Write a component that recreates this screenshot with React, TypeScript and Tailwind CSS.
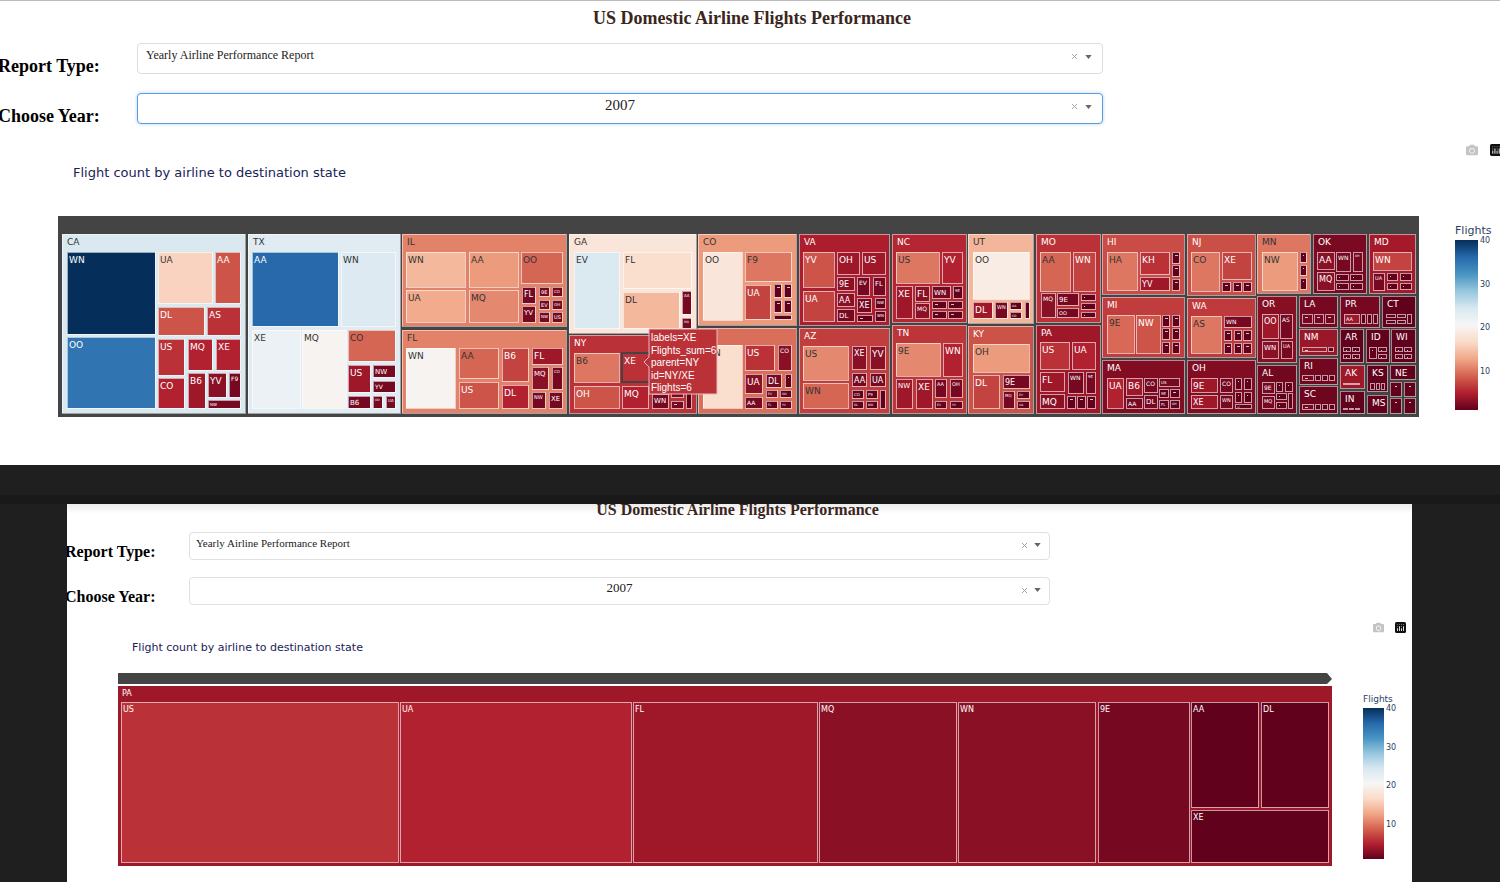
import React, { useId } from "react";
import { FaCamera } from "react-icons/fa";

type Leaf = [x1: number, y1: number, x2: number, y2: number, flights: number, label?: string];
type Region = { name: string; box: [number, number, number, number]; avg: number; leaves: Leaf[] };

const RDBU: [number, number, number][] = [
  [98, 1, 28], [176, 31, 46], [212, 98, 80], [241, 167, 135], [250, 219, 201], [247, 246, 246],
  [216, 232, 240], [150, 198, 222], [72, 148, 195], [38, 104, 170], [6, 46, 90],
];

function flightColor(n: number) {
  const t = Math.max(0, Math.min(1, (n - 1) / 39)) * 10;
  const i = Math.min(9, Math.floor(t));
  const f = t - i;
  const c = RDBU[i].map((v, k) => Math.round(v + (RDBU[i + 1][k] - v) * f));
  return `rgb(${c.join(",")})`;
}

const labelColor = (n: number) => (n >= 9 && n <= 33 ? "#333" : "#fff");

const ADVANCE: Record<string, number> = {
  M: 0.86, W: 0.99, Q: 0.79, O: 0.79, N: 0.75, C: 0.7, U: 0.73, D: 0.77, H: 0.75, F: 0.58, L: 0.56, Y: 0.61, T: 0.61,
  I: 0.3, J: 0.3, P: 0.6, "-": 0.36,
};

function fitSize(label: string, w: number, h: number, max: number) {
  const em = label.split("").reduce((sum, ch) => sum + (ADVANCE[ch] ?? 0.67), 0);
  return Math.max(2, Math.floor(Math.min(max, (w - 3) / em, (h - 2) * 0.75)));
}

const grid = (cols: [number, number][], rows: [number, number][], n = 1, label?: string): Leaf[] =>
  rows.flatMap(([y1, y2]) => cols.map(([x1, x2]): Leaf => [x1, y1, x2, y2, n, label]));

const US_REGIONS: Region[] = [
  { name: "CA", box: [62, 234, 245, 413], avg: 24.2, leaves: [
    [67, 252, 155, 334, 40, "WN"], [67, 337, 155, 408, 35, "OO"], [158, 252, 212, 303, 16, "UA"], [215, 252, 240, 303, 8, "AA"],
    [158, 307, 204, 335, 8, "DL"], [207, 307, 240, 335, 6, "AS"], [158, 339, 184, 375, 6, "US"], [188, 339, 212, 370, 5, "MQ"],
    [216, 339, 240, 370, 5, "XE"], [158, 378, 184, 408, 5, "CO"], [188, 373, 205, 408, 4, "B6"], [208, 373, 226, 397, 3, "YV"],
    [229, 373, 240, 397, 2, "F9"], [208, 400, 240, 408, 2, "NW"]] },
  { name: "TX", box: [248, 234, 400, 413], avg: 23.4, leaves: [
    [252, 252, 338, 326, 36, "AA"], [341, 252, 395, 326, 23.8, "WN"], [252, 330, 300, 408, 22, "XE"], [302, 330, 346, 408, 20, "MQ"],
    [348, 330, 395, 361, 9, "CO"], [348, 365, 370, 392, 4, "US"], [373, 365, 395, 377, 2, "NW"], [373, 381, 395, 392, 2, "YV"],
    [348, 396, 370, 408, 2, "B6"], [373, 396, 382, 408, 2, "OO"], [386, 396, 395, 408, 2, "UA"]] },
  { name: "IL", box: [402, 234, 566, 326], avg: 10.6, leaves: [
    [406, 252, 465, 287, 14, "WN"], [469, 252, 518, 287, 12, "AA"], [521, 252, 562, 283, 9, "OO"], [406, 290, 465, 322, 13, "UA"],
    [469, 290, 518, 322, 11, "MQ"], [522, 287, 535, 303, 2, "FL"], [539, 287, 549, 296, 2, "9E"], [552, 287, 562, 296, 2, "CO"],
    [522, 306, 535, 322, 2, "YV"], [539, 300, 549, 309, 2, "EV"], [552, 300, 562, 309, 2, "OH"], [539, 312, 549, 322, 2, "NW"],
    [552, 312, 562, 322, 2, "US"]] },
  { name: "FL", box: [402, 330, 566, 413], avg: 10.6, leaves: [
    [406, 348, 455, 408, 20, "WN"], [459, 348, 498, 378, 9, "AA"], [459, 382, 498, 408, 8, "US"], [502, 348, 528, 381, 7, "B6"],
    [502, 385, 528, 408, 5, "DL"], [532, 348, 562, 364, 4, "FL"], [532, 367, 548, 389, 3, "MQ"], [552, 367, 562, 389, 2, "CO"],
    [532, 392, 545, 408, 2, "NW"], [549, 392, 562, 408, 2, "XE"]] },
  { name: "GA", box: [569, 234, 696, 333], avg: 18, leaves: [
    [574, 252, 619, 328, 24, "EV"], [623, 252, 691, 288, 17, "FL"], [623, 292, 679, 328, 14, "DL"], [682, 291, 691, 314, 2, "AA"],
    [682, 318, 691, 328, 2, "MQ"]] },
  { name: "NY", box: [569, 335, 696, 413], avg: 6, leaves: [
    [574, 353, 619, 382, 10, "B6"], [574, 386, 619, 408, 8, "OH"], [622, 353, 660, 382, 6, "XE"], [622, 386, 648, 408, 5, "MQ"],
    [652, 394, 668, 408, 2, "WN"], [671, 390, 683, 397, 2, "--"], [671, 401, 683, 408, 2, "--"], [686, 380, 691, 408, 1]] },
  { name: "CO", box: [698, 234, 796, 325], avg: 12, leaves: [
    [703, 252, 742, 320, 18, "OO"], [745, 252, 791, 281, 10, "F9"], [745, 285, 770, 319, 7, "UA"],
    ...grid([[774, 781], [784, 791]], [[284, 297], [300, 312]], 1, "--"), [774, 315, 791, 319, 1]] },
  { name: "", box: [698, 328, 796, 413], avg: 9.5, leaves: [
    [703, 345, 742, 408, 17, "WN"], [745, 345, 774, 370, 6, "US"], [778, 345, 791, 370, 3, "CO"], [745, 374, 762, 393, 3, "UA"],
    [766, 374, 781, 387, 2, "DL"], [785, 374, 791, 387, 1, "-"], [745, 397, 762, 408, 2, "AA"], [766, 390, 777, 397, 2, "EV"],
    [780, 390, 791, 397, 1, "OO"], [766, 401, 777, 408, 1, "FL"], [780, 401, 791, 408, 1, "YV"]] },
  { name: "VA", box: [799, 234, 889, 325], avg: 4.7, leaves: [
    [803, 252, 834, 287, 8, "YV"], [837, 252, 859, 274, 4, "OH"], [862, 252, 885, 274, 4, "US"], [837, 277, 854, 290, 3, "9E"],
    [857, 277, 869, 295, 2, "EV"], [873, 277, 885, 295, 2, "FL"], [803, 291, 834, 321, 7, "UA"], [837, 293, 854, 306, 3, "AA"],
    [857, 298, 871, 312, 2, "XE"], [875, 298, 885, 308, 1, "NW"], [837, 309, 854, 321, 2, "DL"], [857, 315, 872, 321, 1, "--"],
    [875, 311, 885, 321, 1, "WN"]] },
  { name: "AZ", box: [799, 328, 889, 413], avg: 6.7, leaves: [
    [803, 346, 848, 380, 11, "US"], [803, 383, 848, 408, 9, "WN"], [852, 346, 866, 369, 3, "XE"], [870, 346, 885, 369, 3, "YV"],
    [852, 373, 866, 386, 2, "AA"], [870, 373, 885, 386, 2, "UA"], [852, 390, 863, 398, 1, "CO"], [866, 390, 877, 398, 1, "F9"],
    [852, 401, 863, 408, 1, "DL"], [866, 401, 877, 408, 1, "NW"], [880, 390, 885, 408, 1]] },
  { name: "NC", box: [892, 234, 966, 322], avg: 5.3, leaves: [
    [896, 252, 939, 283, 10, "US"], [942, 252, 962, 283, 5, "YV"], [896, 286, 912, 318, 4, "XE"], [915, 286, 929, 301, 3, "FL"],
    [915, 303, 929, 318, 3, "MQ"], [932, 286, 950, 298, 2, "WN"], [953, 286, 962, 298, 1, "9E"],
    ...grid([[932, 946], [948, 962]], [[301, 308], [311, 318]], 1, "--")] },
  { name: "TN", box: [892, 325, 966, 413], avg: 6.2, leaves: [
    [896, 343, 940, 376, 11, "9E"], [943, 343, 962, 376, 5, "WN"], [896, 379, 912, 408, 4, "NW"], [916, 379, 932, 408, 4, "XE"],
    [935, 379, 946, 397, 2, "AA"], [950, 379, 962, 397, 2, "OH"], [935, 401, 946, 408, 1, "EV"], [950, 401, 962, 408, 1, "YV"]] },
  { name: "UT", box: [968, 234, 1033, 323], avg: 13.8, leaves: [
    [973, 252, 1029, 299, 19, "OO"], [973, 302, 992, 318, 4, "DL"], [995, 302, 1007, 318, 2, "WN"], [1010, 302, 1021, 309, 1, "AA"],
    [1010, 312, 1021, 318, 1, "CO"], [1025, 302, 1029, 318, 1]] },
  { name: "KY", box: [968, 326, 1033, 413], avg: 7.9, leaves: [
    [973, 344, 1029, 372, 12, "OH"], [973, 375, 999, 408, 7, "DL"], [1003, 375, 1029, 388, 2, "9E"], [1003, 391, 1014, 408, 2, "MQ"],
    [1017, 391, 1029, 398, 1, "EV"], [1017, 401, 1029, 408, 1, "UA"]] },
  { name: "MO", box: [1036, 234, 1100, 322], avg: 6, leaves: [
    [1040, 252, 1070, 291, 9, "AA"], [1073, 252, 1095, 291, 7, "WN"], [1041, 293, 1055, 317, 3, "MQ"], [1057, 293, 1078, 305, 2, "9E"],
    [1057, 308, 1078, 317, 2, "OO"], ...grid([[1081, 1095]], [[294, 300], [303, 309], [312, 317]], 1, "-")] },
  { name: "PA", box: [1036, 325, 1100, 413], avg: 4, leaves: [
    [1040, 342, 1069, 369, 6, "US"], [1072, 342, 1095, 369, 5, "UA"], [1040, 372, 1064, 391, 4, "FL"], [1068, 372, 1083, 393, 2, "WN"],
    [1086, 372, 1095, 393, 2, "9E"], [1040, 394, 1064, 408, 3, "MQ"],
    ...grid([[1067, 1075], [1077, 1085], [1087, 1095]], [[396, 408]], 1, "--")] },
  { name: "HI", box: [1102, 234, 1184, 294], avg: 7.6, leaves: [
    [1107, 252, 1137, 290, 10, "HA"], [1140, 252, 1169, 274, 6, "KH"], [1140, 277, 1169, 290, 4, "YV"],
    ...grid([[1172, 1179]], [[252, 263], [265, 276], [279, 290]], 1, "--")] },
  { name: "MI", box: [1102, 297, 1184, 357], avg: 6.6, leaves: [
    [1107, 315, 1134, 353, 9.2, "9E"], [1136, 315, 1160, 353, 8, "NW"],
    ...grid([[1162, 1169], [1172, 1179]], [[315, 326], [328, 339], [342, 353]], 1, "--")] },
  { name: "MA", box: [1102, 360, 1184, 413], avg: 2.6, leaves: [
    [1107, 378, 1123, 408, 5, "UA"], [1126, 378, 1142, 395, 4, "B6"], [1126, 398, 1142, 408, 2, "AA"], [1144, 378, 1157, 392, 2, "CO"],
    [1144, 395, 1157, 408, 2, "DL"], [1159, 378, 1179, 386, 2, "US"], [1159, 389, 1168, 397, 1, "9E"], [1170, 389, 1179, 397, 1, "--"],
    [1159, 400, 1168, 408, 1, "FL"], [1170, 400, 1179, 408, 1, "OH"]] },
  { name: "NJ", box: [1187, 234, 1255, 295], avg: 7.7, leaves: [
    [1191, 252, 1219, 291, 10, "CO"], [1222, 252, 1251, 279, 7, "XE"],
    ...grid([[1222, 1230], [1233, 1241], [1243, 1251]], [[282, 291]], 1, "--")] },
  { name: "WA", box: [1187, 298, 1255, 357], avg: 6.5, leaves: [
    [1191, 316, 1221, 353, 10, "AS"], [1224, 316, 1251, 327, 2, "WN"],
    ...grid([[1224, 1231], [1234, 1241], [1243, 1251]], [[330, 340], [343, 353]], 1, "--")] },
  { name: "OH", box: [1187, 360, 1255, 413], avg: 2.6, leaves: [
    [1191, 378, 1217, 392, 4, "9E"], [1191, 395, 1217, 408, 4, "XE"], [1220, 378, 1232, 392, 2, "CO"], [1220, 395, 1232, 408, 2, "WN"],
    ...grid([[1235, 1241], [1244, 1251]], [[378, 389], [392, 402]], 1, "-"), [1235, 404, 1251, 408, 1, "YV"]] },
  { name: "MN", box: [1257, 234, 1310, 293], avg: 10, leaves: [
    [1262, 252, 1297, 290, 12, "NW"], ...grid([[1300, 1306]], [[252, 262], [265, 275], [278, 289]], 1, "-")] },
  { name: "OK", box: [1313, 234, 1366, 293], avg: 2.2, leaves: [
    [1317, 252, 1334, 269, 3, "AA"], [1336, 252, 1350, 271, 2, "WN"], [1353, 252, 1362, 271, 2, "OH"], [1317, 272, 1334, 290, 3, "MQ"],
    ...grid([[1336, 1348], [1350, 1362]], [[274, 280], [283, 289]], 1, "-")] },
  { name: "MD", box: [1369, 234, 1415, 293], avg: 4.3, leaves: [
    [1373, 252, 1411, 270, 7, "WN"], [1373, 273, 1384, 290, 2, "UA"],
    ...grid([[1387, 1397], [1400, 1411]], [[273, 280], [283, 289]], 1, "-")] },
  { name: "OR", box: [1257, 296, 1296, 362], avg: 2.8, leaves: [
    [1262, 314, 1278, 338, 4, "OO"], [1280, 314, 1292, 338, 2, "AS"], [1262, 341, 1278, 358, 3, "WN"], [1281, 341, 1292, 358, 2, "UA"]] },
  { name: "LA", box: [1299, 296, 1337, 327], avg: 2, leaves: grid([[1302, 1312], [1314, 1323], [1325, 1334]], [[314, 323]], 2, "--") },
  { name: "PR", box: [1340, 296, 1379, 327], avg: 2, leaves: [
    [1344, 314, 1359, 323, 4, "AA"], ...grid([[1361, 1365], [1367, 1371], [1373, 1377]], [[314, 323]])] },
  { name: "CT", box: [1382, 296, 1415, 327], avg: 1, leaves: [
    ...grid([[1386, 1395], [1397, 1405]], [[314, 317], [320, 323]]), [1407, 314, 1411, 323, 1]] },
  { name: "NM", box: [1299, 329, 1337, 355], avg: 3.8, leaves: [[1302, 347, 1326, 351, 4, "--"], [1328, 347, 1333, 351, 1]] },
  { name: "RI", box: [1299, 358, 1337, 384], avg: 1.8, leaves: [
    [1302, 375, 1313, 380, 2, "--"], ...grid([[1315, 1320], [1322, 1327], [1329, 1334]], [[375, 380]])] },
  { name: "SC", box: [1299, 386, 1337, 413], avg: 1.6, leaves: [
    [1302, 404, 1313, 409, 2, "--"], ...grid([[1315, 1320], [1322, 1327], [1329, 1334]], [[404, 409]])] },
  { name: "AL", box: [1257, 365, 1296, 413], avg: 1.8, leaves: [
    [1262, 382, 1274, 393, 2, "9E"], [1262, 396, 1274, 408, 2, "MQ"], [1276, 382, 1282, 391, 1, "-"], [1285, 382, 1292, 391, 1, "-"],
    [1276, 393, 1286, 399, 1, "-"], [1276, 402, 1286, 408, 1, "-"], [1288, 393, 1292, 408, 1]] },
  { name: "AR", box: [1340, 329, 1363, 362], avg: 1, leaves: grid([[1343, 1350], [1352, 1359]], [[347, 351], [354, 358]], 1, "-") },
  { name: "ID", box: [1366, 329, 1389, 362], avg: 1, leaves: [
    [1369, 347, 1376, 358, 1, "-"], ...grid([[1378, 1386]], [[347, 351], [354, 358]], 1, "-")] },
  { name: "WI", box: [1391, 329, 1415, 362], avg: 1, leaves: grid([[1395, 1402], [1404, 1411]], [[347, 351], [354, 358]], 1, "-") },
  { name: "AK", box: [1340, 365, 1364, 388], avg: 4, leaves: [[1343, 383, 1359, 383, 4]] },
  { name: "KS", box: [1367, 365, 1387, 391], avg: 1, leaves: grid([[1370, 1374], [1376, 1379], [1381, 1384]], [[383, 389]]) },
  { name: "NE", box: [1390, 365, 1415, 379], avg: 1, leaves: [] },
  { name: "IN", box: [1340, 391, 1364, 413], avg: 1, leaves: grid([[1343, 1347], [1349, 1353], [1355, 1359]], [[408, 408]]) },
  { name: "MS", box: [1367, 395, 1387, 413], avg: 1, leaves: [] },
  { name: "-", box: [1390, 382, 1401, 396], avg: 1, leaves: [] },
  { name: "-", box: [1404, 382, 1415, 396], avg: 1, leaves: [] },
  { name: "-", box: [1390, 398, 1401, 413], avg: 1, leaves: [] },
  { name: "-", box: [1404, 398, 1415, 413], avg: 1, leaves: [] },
];

const PA_LEAVES: Leaf[] = [
  [121, 702, 398, 862, 6, "US"], [400, 702, 631, 862, 5, "UA"], [633, 702, 817, 862, 4, "FL"], [819, 702, 956, 862, 3, "MQ"],
  [958, 702, 1095, 862, 3, "WN"], [1098, 702, 1189, 862, 2, "9E"], [1191, 702, 1258, 807, 1, "AA"], [1261, 702, 1328, 807, 1, "DL"],
  [1191, 810, 1328, 862, 1, "XE"],
];

const CHART_FONT = "[font-family:'DejaVu_Sans',Verdana,sans-serif]";

function LeafTile({ leaf, max }: { leaf: Leaf; max: number }) {
  const [x1, y1, x2, y2, n, label] = leaf;
  const size = label ? fitSize(label, x2 - x1, y2 - y1, max) : 0;
  return (
    <g>
      <rect x={x1} y={y1} width={x2 - x1} height={Math.max(1, y2 - y1)} fill={flightColor(n)} stroke="#fff" strokeOpacity={0.6} shapeRendering="crispEdges" />
      {label && label[0] === "-" && (
        <rect x={x1 + 3} y={y1 + 3} width={label.length * 2 - 1} height={1} fill="#fff" fillOpacity={0.75} />
      )}
      {label && label[0] !== "-" && (
        <text x={x1 + 2} y={y1 + 2 + size} fontSize={size} fill={labelColor(n)}>{label}</text>
      )}
    </g>
  );
}

function Tooltip() {
  const lines = ["labels=XE", "Flights_sum=6", "parent=NY", "id=NY/XE", "Flights=6"];
  return (
    <g>
      <rect x={622} y={353} width={38} height={29} fill="none" stroke="#444" strokeWidth={2} />
      <path d="M644 362L649 357V329H717V394H649V367Z" fill={flightColor(6)} stroke="#e9b9bb" strokeWidth={1} />
      <g fontSize={10} fill="#fff" className="[font-family:'Liberation_Sans',Arial,sans-serif]">
        {lines.map((line, i) => (
          <text key={line} x={651} y={341 + Math.round(i * 12.6)}>{line}</text>
        ))}
      </g>
    </g>
  );
}

function CountryTreemap() {
  return (
    <svg viewBox="58 216 1361 201" role="img" aria-label="Flights by state and airline" className={`block h-auto w-full ${CHART_FONT}`}>
      <rect x={58} y={216} width={1361} height={201} fill="#444" />
      {US_REGIONS.map(({ name, box: [x1, y1, x2, y2], avg, leaves }, i) => (
        <g key={i}>
          <rect x={x1} y={y1} width={x2 - x1} height={y2 - y1} fill={flightColor(avg)} stroke="#fff" strokeOpacity={0.5} shapeRendering="crispEdges" />
          {name === "-" ? (
            <rect x={x1 + 5} y={y1 + 4} width={2} height={1} fill="#fff" fillOpacity={0.8} />
          ) : (
            <text x={x1 + 5} y={y1 + 11} fontSize={9} fill={labelColor(avg)}>{name}</text>
          )}
          {leaves.map((leaf, k) => <LeafTile key={k} leaf={leaf} max={9} />)}
        </g>
      ))}
      <Tooltip />
    </svg>
  );
}

function StateTreemap() {
  return (
    <svg viewBox="118 673 1214 194" role="img" aria-label="Flights to PA by airline" className={`block h-auto w-full ${CHART_FONT}`}>
      <path d="M118 673H1327L1332 679L1327 684H118Z" fill="#444" />
      <rect x={118} y={686} width={1214} height={180} fill={flightColor(4)} />
      <text x={122} y={696} fontSize={8} fill="#fff">PA</text>
      {PA_LEAVES.map((leaf, k) => <LeafTile key={k} leaf={leaf} max={8} />)}
    </svg>
  );
}

type ColorBarProps = { top: number; bar: number; width: number; height: number; total: number; boxWidth: number; titleSize: number; tickSize: number };

function ColorBar({ top, bar, width, height, total, boxWidth, titleSize, tickSize }: ColorBarProps) {
  const gradient = useId();
  return (
    <svg width={boxWidth} height={total} viewBox={`0 0 ${boxWidth} ${total}`} role="img" aria-label="Flights colour scale" className={`block shrink-0 ${CHART_FONT}`}>
      <defs>
        <linearGradient id={gradient} x1="0" y1="1" x2="0" y2="0">
          {RDBU.map((c, i) => <stop key={i} offset={i / 10} stopColor={`rgb(${c.join(",")})`} />)}
        </linearGradient>
      </defs>
      <text x={0} y={top} fontSize={titleSize} fill="#2a3f5f">Flights</text>
      <rect x={0} y={bar} width={width} height={height} fill={`url(#${gradient})`} />
      {[40, 30, 20, 10].map((n) => (
        <text key={n} x={width + 2} y={Math.round(bar + ((40 - n) / 39) * height) + 3} fontSize={tickSize} fill="#2a3f5f">{n}</text>
      ))}
    </svg>
  );
}

function PlotlyLogo({ className }: { className: string }) {
  return (
    <svg viewBox="0 0 132 132" className={className} aria-hidden="true">
      <rect width="132" height="132" rx="18" fill="#111" />
      <g fill="#ddd">
        <circle cx="30" cy="30" r="6" fill="#b06a8c" /><circle cx="54" cy="30" r="6" fill="#b06a8c" />
        <circle cx="78" cy="30" r="6" fill="#999" /><circle cx="102" cy="30" r="6" fill="#999" /><circle cx="30" cy="54" r="6" fill="#999" /><circle cx="78" cy="54" r="6" fill="#999" />
        <rect x="24" y="72" width="12" height="36" rx="6" /><rect x="48" y="48" width="12" height="60" rx="6" />
        <rect x="72" y="72" width="12" height="36" rx="6" /><rect x="96" y="48" width="12" height="60" rx="6" />
      </g>
    </svg>
  );
}

type PickerProps = { label: string; value: string; labelClass: string; selectClass: string; actionsClass: string };

function Picker({ label, value, labelClass, selectClass, actionsClass }: PickerProps) {
  const id = useId();
  return (
    <div className="flex items-start">
      <label htmlFor={id} className={`shrink-0 font-bold whitespace-nowrap text-black ${labelClass}`}>{label}</label>
      <div className="relative min-w-0 flex-1">
        <select id={id} defaultValue={value} className={`block w-full appearance-none rounded border bg-white text-[#222] outline-none ${selectClass}`}>
          <option>{value}</option>
        </select>
        <div className={`absolute top-0 flex items-center ${actionsClass}`}>
          <button type="button" aria-label={`Clear ${label}`} className="text-[#999]">
            <svg viewBox="0 0 8 8" className="h-[7px] w-[7px]" stroke="currentColor" fill="none"><path d="M1 1L7 7M7 1L1 7" /></svg>
          </button>
          <svg viewBox="0 0 8 5" className="h-[4px] w-[7px] fill-[#666]" aria-hidden="true"><path d="M0 0H8L4 5Z" /></svg>
        </div>
      </div>
    </div>
  );
}

export default function App() {
  return (
    <main className="min-h-screen overflow-hidden bg-[#1f1f1f] [font-family:'Liberation_Serif','Times_New_Roman',serif]">
      <section className="overflow-hidden border-t border-[#bbb] bg-white pt-[5px] pb-12">
        <h1 className="pl-1 text-center text-lg leading-6 font-bold text-[#3b261d]">US Domestic Airline Flights Performance</h1>
        <div className="mt-[13px] -ml-[2px] flex flex-col gap-[15px] pr-[397px]">
          <Picker label="Report Type:" value="Yearly Airline Performance Report"
            labelClass="w-[139px] pt-[11px] text-lg leading-6" selectClass="h-[31px] border-[#ddd] px-2 pb-2 text-xs" actionsClass="right-[11px] h-[27px] gap-[7px]" />
          <Picker label="Choose Year:" value="2007"
            labelClass="w-[139px] pt-[11px] text-lg leading-6" selectClass="h-[31px] border-[#5a9bd8] px-2 pb-[11px] text-center text-[15px] shadow-[0_0_3px_1px_#cfe6fa]" actionsClass="right-[11px] h-[27px] gap-[7px]" />
        </div>
        <div className="mt-[14px] -mr-[2px] flex h-4 items-center justify-end gap-3">
          <button type="button" aria-label="Download plot as a png" className="text-[#c4c4c4]"><FaCamera className="h-3 w-3" /></button>
          <a href="#plotly" aria-label="Produced with Plotly"><PlotlyLogo className="block h-3 w-3" /></a>
        </div>
        <h2 className={`mt-[5px] pl-[73px] text-[13px] leading-5 text-[#1a2258] ${CHART_FONT}`}>Flight count by airline to destination state</h2>
        <div className="mt-[33px] flex gap-9 pl-[58px]">
          <div className="min-w-0 flex-1"><CountryTreemap /></div>
          <ColorBar top={18} bar={24} width={23} height={170} total={201} boxWidth={45} titleSize={11} tickSize={8} />
        </div>
      </section>

      <div className="h-[30px]" />
      <div className="h-[9px] bg-[#191919]" />

      <section className="pr-[88px] pl-[67px]">
        <div className="overflow-hidden bg-white bg-linear-to-b from-[#ececec] to-white to-[10px] pb-4">
          <h1 className="pr-1 text-center text-base leading-3 font-bold text-[#3b261d]">US Domestic Airline Flights Performance</h1>
          <div className="mt-4 -ml-[2px] flex flex-col gap-[15px] pr-[362px]">
            <Picker label="Report Type:" value="Yearly Airline Performance Report"
              labelClass="w-[124px] pt-[10px] text-base leading-5" selectClass="h-[28px] border-[#e0e0e0] px-[6px] pb-[5px] text-[11px]" actionsClass="right-[9px] h-[26px] gap-[6px]" />
            <Picker label="Choose Year:" value="2007"
              labelClass="w-[124px] pt-[10px] text-base leading-5" selectClass="h-[28px] border-[#e0e0e0] px-[6px] pb-[11px] text-center text-[13px]" actionsClass="right-[9px] h-[26px] gap-[6px]" />
          </div>
          <div className="mt-3 flex h-4 items-center justify-end gap-[11px] pr-[6px]">
            <button type="button" aria-label="Download plot as a png" className="text-[#c4c4c4]"><FaCamera className="h-[11px] w-[11px]" /></button>
            <a href="#plotly" aria-label="Produced with Plotly"><PlotlyLogo className="block h-[11px] w-[11px]" /></a>
          </div>
          <h2 className={`mt-[3px] pl-[65px] text-[11px] leading-5 text-[#1a2258] ${CHART_FONT}`}>Flight count by airline to destination state</h2>
          <div className="mt-[15px] flex gap-[31px] pl-[51px]">
            <div className="min-w-0 flex-1"><StateTreemap /></div>
            <ColorBar top={29} bar={35} width={21} height={151} total={194} boxWidth={49} titleSize={9} tickSize={8} />
          </div>
        </div>
      </section>
    </main>
  );
}
